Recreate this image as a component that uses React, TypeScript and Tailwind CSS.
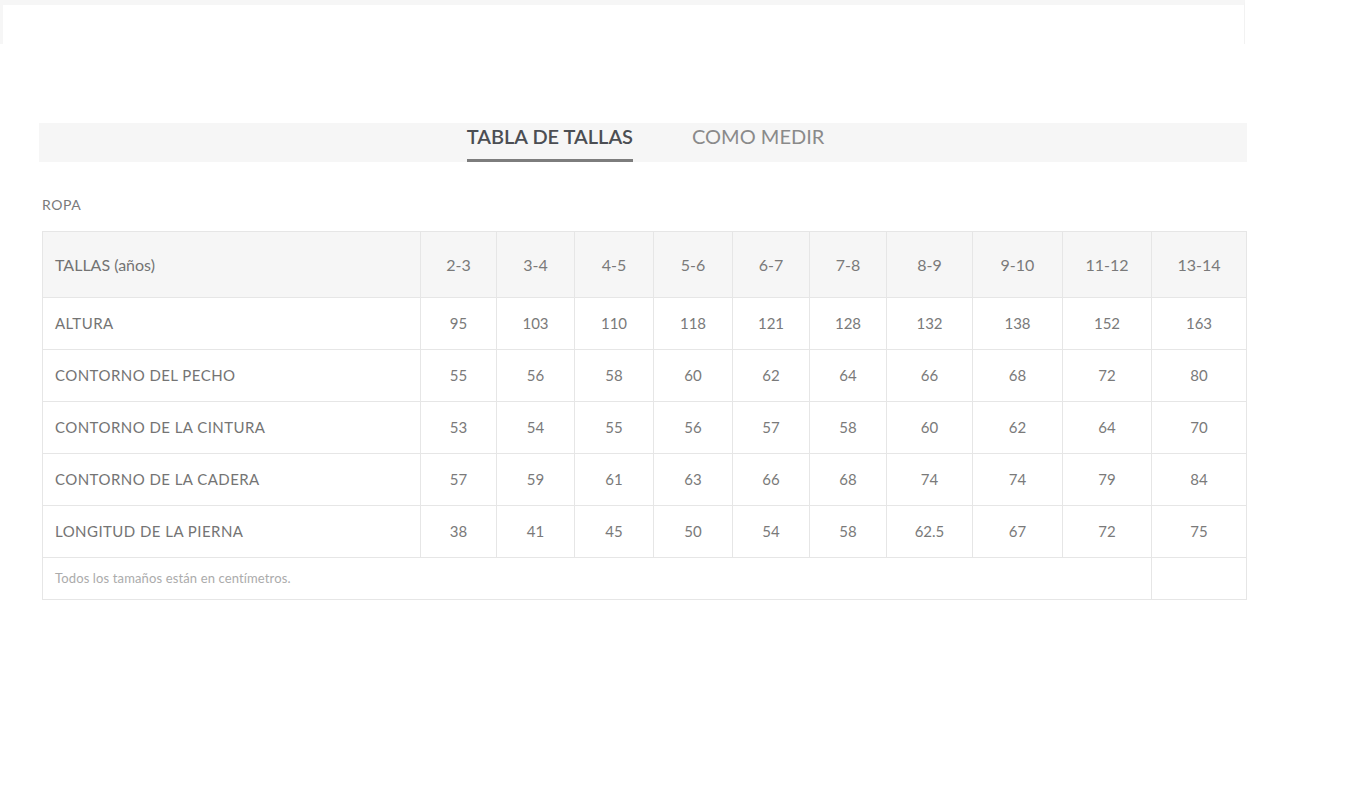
import React from "react";

const sizes = ["2-3", "3-4", "4-5", "5-6", "6-7", "7-8", "8-9", "9-10", "11-12", "13-14"];
const colWidths = [378, 76, 78, 79, 79, 77, 77, 86, 90, 89, 95];

const rows: { label: string; values: string[] }[] = [
  { label: "ALTURA", values: ["95", "103", "110", "118", "121", "128", "132", "138", "152", "163"] },
  { label: "CONTORNO DEL PECHO", values: ["55", "56", "58", "60", "62", "64", "66", "68", "72", "80"] },
  { label: "CONTORNO DE LA CINTURA", values: ["53", "54", "55", "56", "57", "58", "60", "62", "64", "70"] },
  { label: "CONTORNO DE LA CADERA", values: ["57", "59", "61", "63", "66", "68", "74", "74", "79", "84"] },
  { label: "LONGITUD DE LA PIERNA", values: ["38", "41", "45", "50", "54", "58", "62.5", "67", "72", "75"] },
];

export default function App() {
  return (
    <div className="min-h-[812px] w-[1350px] bg-white font-['Lato',sans-serif] text-[#666]">
      {/* remnant of the container above */}
      <div className="h-[44px] w-[1245px] border-t-[5px] border-l-[3px] border-r border-t-[#f6f6f6] border-l-[#f6f6f6] border-r-[#f2f2f2]" />

      <div className="pl-[39px] pt-[79px] w-[1247px]">
        <nav className="flex h-[39px] justify-center gap-[59px] bg-[#f6f6f6] pl-[5px]">
          <button className="h-full border-b-[3px] border-[#7d7d7d] pb-[10px] text-[20px] leading-[24px] font-semibold text-[#4b4e53]">
            TABLA DE TALLAS
          </button>
          <button className="h-full pb-[13px] text-[20px] leading-[24px] text-[#8a8a8a]">COMO MEDIR</button>
        </nav>

        <div className="pl-[3px]">
          <p className="mt-[32px] text-[14px] font-normal tracking-[0.04em] text-[#7a7a7a]">ROPA</p>

          <table className="mt-[16px] w-[1205px] table-fixed border-collapse">
            <colgroup>
              {colWidths.map((w, i) => (
                <col key={i} style={{ width: w }} />
              ))}
            </colgroup>
            <thead>
              <tr className="h-[66px] bg-[#f6f6f6]">
                <th className="border border-[#e6e6e6] pl-[12px] text-left text-[16px] font-normal text-[#737373]">
                  TALLAS (años)
                </th>
                {sizes.map((s) => (
                  <th key={s} className="border border-[#e6e6e6] text-center text-[16px] font-normal text-[#7a7a7a]">
                    {s}
                  </th>
                ))}
              </tr>
            </thead>
            <tbody>
              {rows.map((r) => (
                <tr key={r.label} className="h-[52px]">
                  <td className="border border-[#e6e6e6] pl-[12px] text-[15px] font-normal tracking-[0.03em] text-[#747474]">
                    {r.label}
                  </td>
                  {r.values.map((v, i) => (
                    <td key={i} className="border border-[#e6e6e6] text-center text-[15px] font-normal text-[#7a7a7a]">
                      {v}
                    </td>
                  ))}
                </tr>
              ))}
              <tr className="h-[42px]">
                <td colSpan={10} className="border border-[#e6e6e6] pl-[12px] text-[13px] font-normal tracking-[0.01em] text-[#ababab]">
                  Todos los tamaños están en centímetros.
                </td>
                <td className="border border-[#e6e6e6]" />
              </tr>
            </tbody>
          </table>
        </div>
      </div>
    </div>
  );
}
